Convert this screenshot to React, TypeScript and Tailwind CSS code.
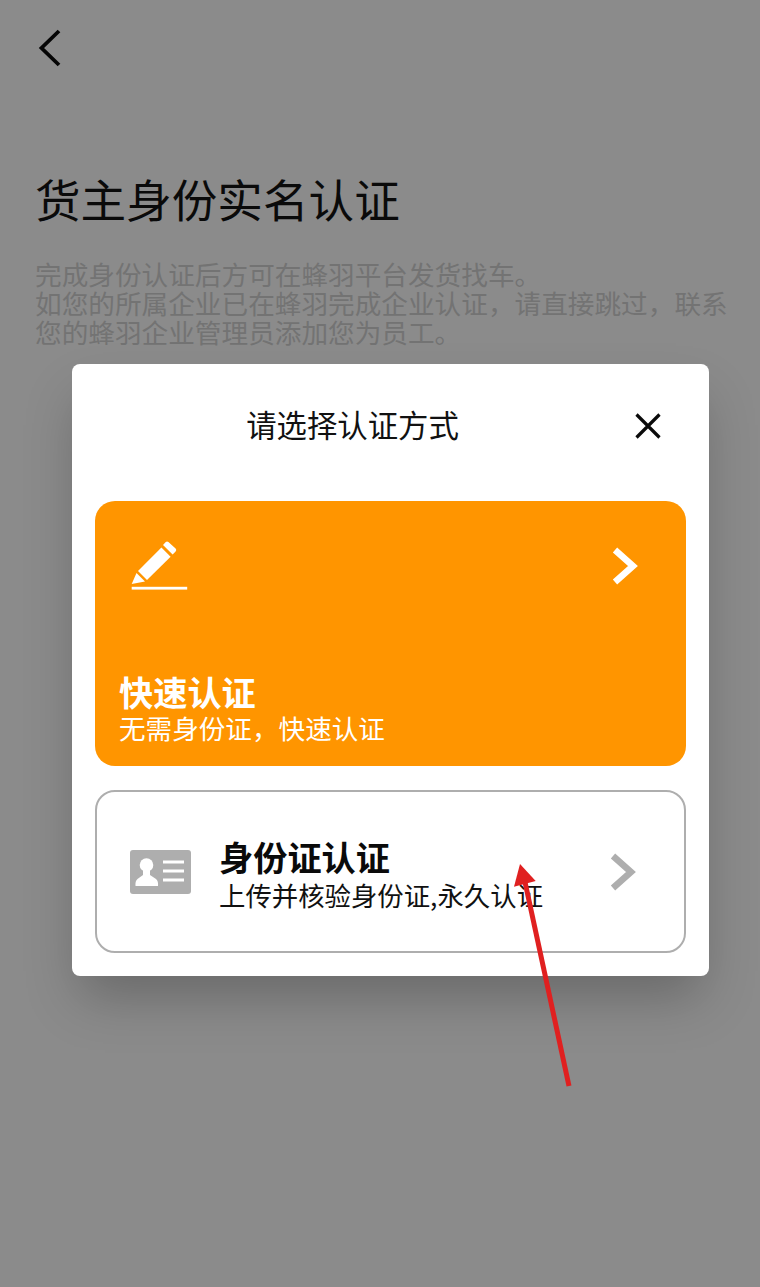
import React from 'react';

const cjk = { fontFamily: '"Noto Sans CJK SC", "Noto Sans", sans-serif' };

function PencilIcon() {
  return (
    <svg width="58" height="52" viewBox="0 0 58 52" fill="none">
      <path d="M32 5 L34.8 2 Q36 0.8 37.4 2 L44.6 8.6 Q46 10 44.6 11.4 L41.6 14.6 Z" fill="#fff" />
      <path d="M30.4 7.6 L39.6 16.8 L16 40 L7 31 Z" fill="#fff" />
      <path d="M5.5 33 L14 41.5 L0.7 44 Z" fill="#fff" />
      <rect x="0.7" y="46.8" width="55.5" height="2.8" fill="#fff" />
    </svg>
  );
}

function IdCardIcon() {
  return (
    <svg width="61" height="44" viewBox="0 0 61 44">
      <rect x="0" y="0" width="61" height="44" rx="3" fill="#aeaeae" />
      <circle cx="16.5" cy="15" r="6.8" fill="#fff" />
      <path d="M13 19 H20 V25 L26 29 Q28.5 31 28 36 H5.5 Q5 31 7.5 29 L13 25 Z" fill="#fff" />
      <rect x="33" y="10.5" width="21" height="3" fill="#fff" />
      <rect x="33" y="19.5" width="21" height="3" fill="#fff" />
      <rect x="33" y="28.5" width="21" height="3" fill="#fff" />
    </svg>
  );
}

function Chevron({ color }: { color: string }) {
  return (
    <svg width="26" height="38" viewBox="0 0 26 38" fill="none">
      <path d="M3 3 L21 19 L3 35" stroke={color} strokeWidth="6.5" />
    </svg>
  );
}

export default function App() {
  return (
    <div className="relative w-[760px] h-[1287px] overflow-hidden bg-[#8b8b8b] pl-[34px] pr-[30px]" style={cjk}>
      <div className="pt-[29px] pl-[3px]">
        <svg width="26" height="38" viewBox="0 0 26 38" fill="none">
          <path d="M22 2 L4.5 19 L22 36" stroke="#050505" strokeWidth="3.8" />
        </svg>
      </div>

      <h1 className="mt-[99px] pl-[1px] text-[45.6px] leading-[64px] font-normal text-[#0a0a0a] whitespace-nowrap">货主身份实名认证</h1>

      <p className="mt-[29px] pl-[1px] text-[26.65px] leading-[29px] text-[#737373] whitespace-nowrap">
        完成身份认证后方可在蜂羽平台发货找车。<br />
        如您的所属企业已在蜂羽完成企业认证，请直接跳过，联系<br />
        您的蜂羽企业管理员添加您为员工。
      </p>

      {/* dialog */}
      <div className="absolute left-[72px] top-[364px] w-[637px] h-[612px] bg-white rounded-[8px] shadow-[0_28px_50px_-8px_rgba(0,0,0,0.25)] px-[23px]">
        <div className="flex items-center h-[137px] pb-[17px] -mx-[23px]">
          <div className="w-[561px] text-center text-[30.4px] leading-[40px] text-[#111]">请选择认证方式</div>
          <svg className="ml-[2px] mt-[4px]" width="26" height="26" viewBox="0 0 26 26" fill="none">
            <path d="M1.5 1.5 L24.5 24.5 M24.5 1.5 L1.5 24.5" stroke="#0a0a0a" strokeWidth="3.2" />
          </svg>
        </div>

        <div className="flex flex-col h-[265px] rounded-[20px] bg-[#ff9500] pl-[24px] pr-[48px] text-white">
          <div className="flex justify-between items-start pt-[39px] pl-[12px]">
            <PencilIcon />
            <div className="mt-[7px]"><Chevron color="#ffffff" /></div>
          </div>
          <div className="mt-auto pb-[21px]">
            <div className="text-[34.2px] leading-[36px] font-bold whitespace-nowrap">快速认证</div>
            <div className="mt-[2px] text-[26.6px] leading-[34px] whitespace-nowrap">无需身份证，快速认证</div>
          </div>
        </div>

        <div className="flex items-center h-[163px] mt-[24px] rounded-[20px] border-2 border-[#aeaeae] pl-[33px] pr-[48px]">
          <IdCardIcon />
          <div className="ml-[28px] flex-1 pt-[6px]">
            <div className="text-[34.2px] leading-[36px] font-bold text-[#0a0a0a] whitespace-nowrap">身份证认证</div>
            <div className="mt-[4px] text-[26.4px] leading-[34px] text-[#111] whitespace-nowrap">上传并核验身份证,永久认证</div>
          </div>
          <Chevron color="#aeaeae" />
        </div>
      </div>

      {/* red annotation arrow */}
      <svg className="absolute left-[500px] top-[860px]" width="80" height="230" viewBox="0 0 80 230" fill="none">
        <path d="M69 226 L25 22" stroke="#e02020" strokeWidth="5" />
        <path d="M20 4 L35.7 21 L14 26.7 Z" fill="#e02020" />
      </svg>
    </div>
  );
}
